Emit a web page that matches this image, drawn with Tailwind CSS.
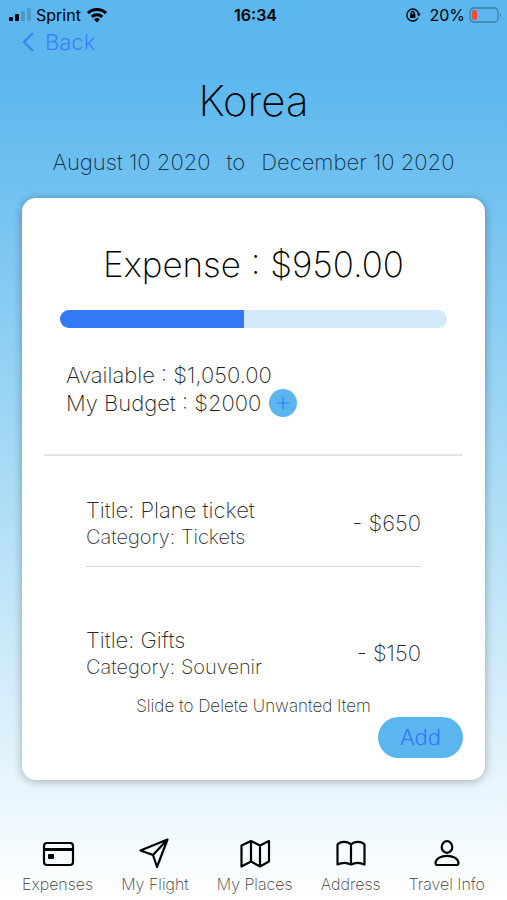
<!DOCTYPE html>
<html lang="en">
<head>
<meta charset="utf-8">
<meta name="viewport" content="width=device-width, initial-scale=1">
<title>Korea - Expenses</title>
<script src="https://cdn.jsdelivr.net/npm/@tailwindcss/browser@4"></script>
</head>
<body class="flex min-h-screen flex-col bg-linear-to-b/srgb from-[#5bb7ee] from-8% via-[#a4d9f5] via-50% to-white font-['Inter','Liberation_Sans',sans-serif] font-extralight text-black">

<div class="grid grid-cols-3 items-center pl-2 pr-1 h-[30px] text-base font-medium">
  <div class="flex items-center gap-1">
    <svg class="h-4 w-6" viewBox="0 0 24 16" aria-hidden="true">
      <rect x="1" y="10" width="4" height="4" rx="1"/><rect x="7" y="7" width="4" height="7" rx="1"/>
      <g fill="#4a9aca"><rect x="13" y="4" width="4" height="10" rx="1"/><rect x="19" y="1" width="4" height="13" rx="1"/></g>
    </svg>
    <span class="font-normal">Sprint</span>
    <svg class="h-4 w-6" viewBox="0 0 24 16" aria-hidden="true" fill="none" stroke="#000" stroke-width="3">
      <path d="M3 6.2a13 13 0 0 1 18 0M6.8 9.8a7.6 7.6 0 0 1 10.4 0"/><path d="M12 15.5l-3-3a4.4 4.4 0 0 1 6 0z" fill="#000" stroke="none"/>
    </svg>
  </div>
  <div class="text-center font-semibold">16:34</div>
  <div class="flex items-center justify-end gap-1">
    <svg class="mr-1 h-4 w-4" viewBox="0 0 16 16" aria-hidden="true" fill="none" stroke="#000" stroke-width="1.4">
      <path d="M13 11A6 6 0 1 1 13.6 6.500"/><path d="M11.800 6.500h4l-2 3z" fill="#000" stroke="none"/><rect x="5" y="7" width="5.4" height="4" rx=".5" fill="#000" stroke="none"/><path d="M6.2 7.2V6a1.5 1.5 0 0 1 3 0v1.2"/>
    </svg>
    <span class="font-normal">20%</span>
    <svg class="h-4 w-[34px]" viewBox="0 0 34 16" aria-hidden="true">
      <rect x="1" y="1" width="28" height="14" rx="4" fill="none" stroke="#3a7fa8" stroke-width="1.3"/><rect x="3" y="3" width="5" height="10" rx="2" fill="#f14a3c"/><path d="M31 6q2 2 0 4z" fill="#3a7fa8"/>
    </svg>
  </div>
</div>

<a href="#" class="ml-[22px] flex h-6 items-center gap-[11px] self-start text-[22px] leading-6 font-light text-[#3b82f8]">
  <svg class="h-5 w-3" viewBox="0 0 12 20" fill="none" stroke="currentColor" stroke-width="2" aria-hidden="true"><path d="M11 1L2 10l9 9"/></svg>Back
</a>

<header class="mt-5 text-center">
  <h1 class="text-[42px] leading-[54px]">Korea</h1>
  <p class="mt-5 flex justify-center gap-4 text-[22px] leading-7 text-[#12303f]"><span>August 10 2020</span><span>to</span><span>December 10 2020</span></p>
</header>

<main class="mx-[22px] mt-[22px] flex flex-col rounded-[14px] bg-white px-[22px] pt-10 pb-[22px] shadow-[0_1px_10px_rgba(0,0,0,0.3)]">
  <h2 class="text-center text-[35px] leading-[52px]">Expense : $950.00</h2>
  <div class="mx-4 mt-5 h-[18px] overflow-hidden rounded-full bg-[#d2eafa]" role="progressbar" aria-label="Budget spent" aria-valuenow="950" aria-valuemin="0" aria-valuemax="2000">
    <div class="h-full bg-[#3478f6]" style="width:47.5%"></div>
  </div>
  <div class="mt-[33px] border-b-2 border-[#e2e4e5] pb-[37px] pl-[22px] text-[22px] leading-7 text-[#1c1c1c]">
    <p>Available : $1,050.00</p>
    <div class="flex items-center gap-2"><span>My Budget : $2000</span>
      <button class="flex size-7 items-center justify-center rounded-full bg-[#5bb5ee] text-[#3478f6]" aria-label="Increase budget">
        <svg class="size-3" viewBox="0 0 12 12" fill="none" stroke="currentColor" stroke-width="1.2" aria-hidden="true"><path d="M6 0v12M0 6h12"/></svg>
      </button>
    </div>
  </div>
  <ul class="mx-[42px] text-[22px] text-[#2a2a2a]">
    <li class="flex items-center justify-between border-b border-[#d8d8d8] pt-10 pb-4">
      <div><p class="leading-7">Title: Plane ticket</p><p class="text-xl leading-[26px]">Category: Tickets</p></div><p>- $650</p>
    </li>
    <li class="flex items-center justify-between pt-[59px]">
      <div><p class="leading-7">Title: Gifts</p><p class="text-xl leading-[26px]">Category: Souvenir</p></div><p>- $150</p>
    </li>
  </ul>
  <p class="mt-[15px] text-center text-[17px] leading-[22px] text-[#2a2a2a]">Slide to Delete Unwanted Item</p>
  <button class="h-[41px] w-[85px] self-end rounded-full bg-[#5bb5ee] text-[22px] font-light text-[#3478f6]">Add</button>
</main>

<nav class="mt-auto flex justify-between px-[22px] pb-[6px] text-base leading-5 text-[#3c3c3c]">
  <a href="#" class="flex flex-col items-center gap-[2px]">
    <svg class="size-9" viewBox="0 0 36 36" fill="none" stroke="#000" stroke-width="2.2" aria-hidden="true"><rect x="4" y="7" width="29" height="22" rx="3"/><path d="M4 13.5h29" stroke-width="3"/><rect x="8" y="18" width="6" height="5" rx="1" fill="#000" stroke="none"/></svg>
    Expenses</a>
  <a href="#" class="flex flex-col items-center gap-[2px]">
    <svg class="size-9" viewBox="0 0 36 36" fill="none" stroke="#000" stroke-width="2.2" stroke-linejoin="round" aria-hidden="true"><path d="M30.500 3.500L3.500 14.500 16 19l4 12zM30.500 3.500L16 19"/></svg>
    My Flight</a>
  <a href="#" class="flex flex-col items-center gap-[2px]">
    <svg class="size-9" viewBox="0 0 36 36" fill="none" stroke="#000" stroke-width="2.2" stroke-linejoin="round" aria-hidden="true"><path d="M4.500 9.500L14 5l9 4.500L32 5v20.500L23 30.500 14 25.500l-9.500 5zM14 5v20.500M23 9.500v21"/></svg>
    My Places</a>
  <a href="#" class="flex flex-col items-center gap-[2px]">
    <svg class="size-9" viewBox="0 0 36 36" fill="none" stroke="#000" stroke-width="2.2" stroke-linejoin="round" aria-hidden="true"><path d="M18 8.500C14.500 5 7.500 5 4.500 8.500V28.500C8.500 26.500 14 26.500 18 28.500C22 26.500 27.500 26.500 31.500 28.500V8.500C28.500 5 21.500 5 18 8.500zM18 8.500v20"/></svg>
    Address</a>
  <a href="#" class="flex flex-col items-center gap-[2px]">
    <svg class="size-9" viewBox="0 0 36 36" fill="none" stroke="#000" stroke-width="2.2" stroke-linejoin="round" aria-hidden="true"><ellipse cx="18" cy="11" rx="5.300" ry="5.800"/><path d="M6.500 27C7 17.500 29 17.500 29.500 27Q29.500 29 27.500 29H8.500Q6.500 29 6.500 27z"/></svg>
    Travel Info</a>
</nav>
</body>
</html>
